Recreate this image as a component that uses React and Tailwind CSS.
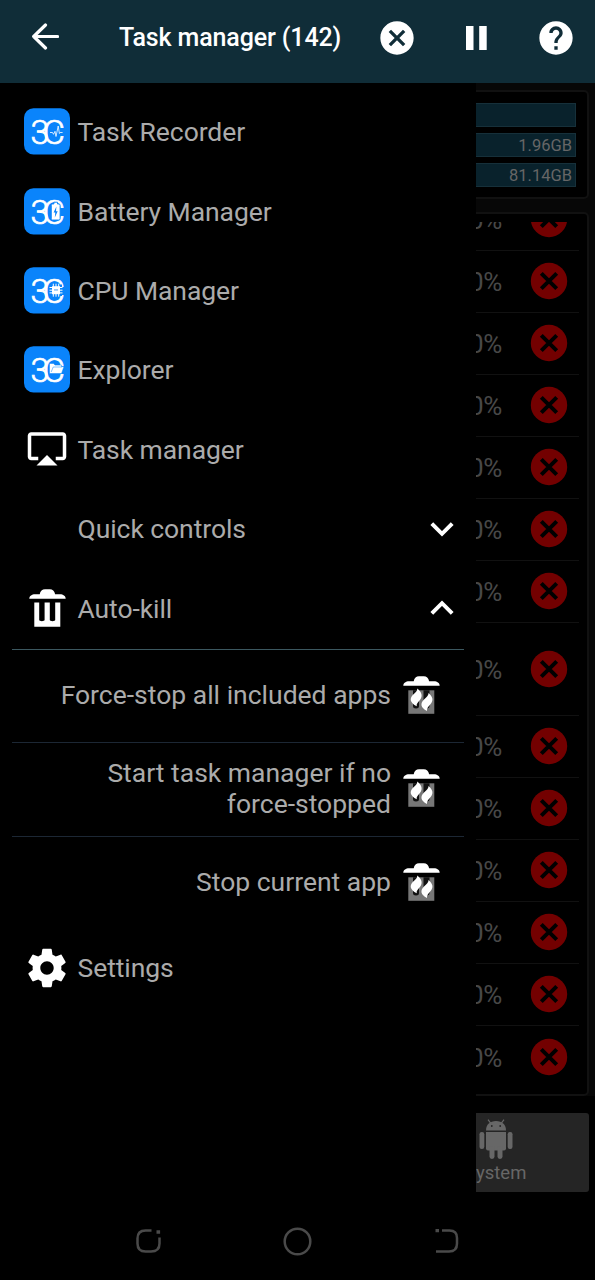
import React from "react";
import { MdAirplay, MdCancel, MdHelp } from "react-icons/md";

function AppLogo({ kind }) {
  return (
    <svg className="h-[47px] w-[46px]" viewBox="0 0 46 47">
      <rect x="0" y="0.2" width="46" height="46.4" rx="9.5" fill="#0a84fb" />
      <text transform="translate(6.6 35.700)" letterSpacing="-6.600" fill="#fff" stroke="#fff" strokeWidth="0.7" fontFamily="Roboto, sans-serif" fontWeight="300" fontSize="34">3C</text>
      {kind === "pulse" && (
        <path d="M26 24.500h2.500l1 1.800 1.500-3 1 5.200 2.200-10.500 1.200 7.500 .7-1h2.500" fill="none" stroke="#fff" strokeWidth=".8" />
      )}
      {kind === "battery" && (
        <>
          <path d="M28.500 16h1.400v-1.800h3.600V16h1.400q1.200 0 1.200 1.200v13.600q0 1.200-1.200 1.200h-6.400q-1.200 0-1.200-1.200V17.200q0-1.200 1.200-1.200z" fill="#fff" stroke="#0a84fb" strokeWidth=".9" />
          <path d="M32.400 18.500l-2.800 6h1.700l-.5 5 2.900-6.300H32z" fill="#0a84fb" />
        </>
      )}
      {kind === "chip" && (
        <>
          <rect x="26.500" y="17.500" width="11.500" height="11.500" fill="#0a84fb" />
          <path d="M29.300 16.700v13M32 16.700v13M34.700 16.700v13M25.500 20.500h13M25.500 23.200h13M25.500 25.900h13" fill="none" stroke="#fff" strokeWidth="1" />
          <rect x="28" y="19.200" width="8" height="8" fill="#fff" />
          <rect x="30" y="22" width="4" height="1.800" fill="#9cc8f5" />
        </>
      )}
      {kind === "folder" && (
        <>
          <path d="M25.500 27.500V17.500h4l1.500 1.600h6.500v1.400H40l-2.500 7z" fill="#fff" stroke="#0a84fb" strokeWidth=".5" />
          <path d="M27.200 26l2-5h9" fill="none" stroke="#0a84fb" strokeWidth=".5" />
        </>
      )}
    </svg>
  );
}

function TrashIcon() {
  return (
    <svg className="h-[38px] w-[37px]" viewBox="0 0 37 38" fill="#fff">
      <path d="M.3 9.700C.3 6.800 3 5.200 6 5.200h4.700C11.300 2 13.300.3 16 .3h4.800c2.700 0 4.700 1.700 5.300 4.900H31c3 0 5.700 1.600 5.700 4.500z" />
      <path d="M5.300 13.500h4.900V31c0 1.500 5.400 1.500 5.400 0V13.500h5.200V31c0 1.500 5.400 1.500 5.400 0V13.500h5.100v24.300h-26z" />
    </svg>
  );
}

function BurnTrashIcon() {
  return (
    <svg className="mb-[2px] h-[38px] w-[37px]" viewBox="0 0 37 38">
      <path d="M.3 9.700C.3 6.800 3 5.200 6 5.200h4.700C11.300 2 13.300.3 16 .3h4.800c2.700 0 4.700 1.700 5.300 4.900H31c3 0 5.700 1.600 5.700 4.500z" fill="#fff" />
      <path d="M5.300 14.300h26v23.500h-26z" fill="#777" />
      <path d="M10 14.300h6V30q0 2.500-3 2.500T10 30zM20.500 14.300h6V30q0 2.500-3 2.500t-3-2.500z" fill="#111" />
      <path d="M14.300 12.500c4.900 4 5.500 8 2.600 11.500-2.200 2.700-3.600 3.700-3.200 6.200-6.700-3.200-7.500-7.700-3.700-11.400 3-2.800 4.300-3.600 4.300-6.300zM25.500 17c4.700 4 5 7.700 1.900 11.300-2.300 2.500-3.600 3.700-3.400 6.700-6.500-3.500-7-7.700-3-11.600 2.800-2.700 4.500-3.600 4.500-6.400z" fill="#fff" />
    </svg>
  );
}

function Gear() {
  return (
    <svg className="size-[46px]" viewBox="0 0 24 24" fill="#fff">
      <path d="M19.430 12.980c.04-.32.07-.64.07-.98s-.03-.66-.07-.98l2.110-1.650c.19-.15.24-.42.12-.64l-2-3.460c-.12-.22-.39-.3-.61-.22l-2.490 1c-.52-.4-1.080-.73-1.690-.98l-.38-2.650C14.460 2.180 14.250 2 14 2h-4c-.25 0-.46.18-.49.42l-.38 2.650c-.61.25-1.170.59-1.690.98l-2.490-1c-.23-.09-.49 0-.61.22l-2 3.460c-.13.22-.07.49.12.64l2.110 1.650c-.04.32-.07.65-.07.98s.03.66.07.98l-2.110 1.650c-.19.15-.24.42-.12.64l2 3.460c.12.22.39.3.61.22l2.490-1c.52.4 1.080.73 1.690.98l.38 2.650c.03.24.24.42.49.42h4c.25 0 .46-.18.49-.42l.38-2.650c.61-.25 1.170-.59 1.690-.98l2.490 1c.23.09.49 0 .61-.22l2-3.460c.12-.22.07-.49-.12-.64l-2.110-1.650zM12 15.500c-1.930 0-3.500-1.570-3.500-3.500s1.570-3.500 3.500-3.500 3.500 1.570 3.500 3.500-1.570 3.500-3.500 3.500z" />
    </svg>
  );
}

function Chevron({ up }) {
  return (
    <svg className="h-4 w-6" viewBox="0 0 24 16" fill="none" stroke="#fff" strokeWidth="4">
      <path d={up ? "M1.800 13.300 12 3.200l10.200 10.100" : "M1.800 2.700 12 12.800 22.200 2.700"} />
    </svg>
  );
}

function MenuRow({ icon, label, end }) {
  return (
    <div className="flex h-[79.4px] items-center pl-[20px] pr-[22px]">
      <div className="flex w-[54px] justify-center">{icon}</div>
      <span className="ml-[3.500px] flex-1 text-[26.500px] leading-[31px] tracking-[-0.07px]">{label}</span>
      {end}
    </div>
  );
}

function SubRow({ lines, border }) {
  return (
    <div className={`ml-3 mr-3 flex h-[93.5px] items-center justify-end border-t pr-[24px] ${border}`}>
      <span className="mr-[12px] pb-[3px] text-right text-[26.500px] leading-[31px]">
        {lines.map((l) => (
          <span key={l} className="block">{l}</span>
        ))}
      </span>
      <BurnTrashIcon />
    </div>
  );
}

function KillIcon() {
  return (
    <svg className="size-[38px] shrink-0" viewBox="0 0 38 38">
      <circle cx="19" cy="19" r="18.200" fill="#730000" />
      <path d="m11.300 11.300 15.400 15.400m0-15.400L11.300 26.700" stroke="#000" strokeWidth="4" />
    </svg>
  );
}

function ProcessRow({ height, last }) {
  return (
    <div className={`mr-[8px] flex shrink-0 items-center justify-between pr-[11px] ${height} ${last ? "" : "border-b border-[#111]"}`}>
      <span className="-ml-[7px] pt-[2px] text-[26px] leading-[30px] tracking-[-0.3px] text-[#484848]">0%</span>
      <KillIcon />
    </div>
  );
}

const heights = [
  "h-[62px]", "h-[62px]", "h-[62px]", "h-[62px]", "h-[62px]", "h-[62px]", "h-[62px]",
  "h-[93px]", "h-[62px]", "h-[62px]", "h-[62px]", "h-[62px]", "h-[62px]", "h-[62px]",
];

function Android() {
  return (
    <svg className="h-[40px] w-[34px]" viewBox="0 0 34 40" fill="#676767">
      <path d="M7 11.500C7 5.500 11 2 17 2s10 3.500 10 9.500z" />
      <path d="m9 .6 3 4M25 .6l-3 4" stroke="#676767" strokeWidth="1.200" />
      <circle cx="12.800" cy="7" r=".9" fill="#252525" />
      <circle cx="21.200" cy="7" r=".9" fill="#252525" />
      <path d="M7 13h20v16.500q0 2-2 2H9q-2 0-2-2z" />
      <rect x=".5" y="13" width="4.800" height="17" rx="2.200" />
      <rect x="28.700" y="13" width="4.800" height="17" rx="2.200" />
      <rect x="10.500" y="27" width="5" height="13" rx="2.400" />
      <rect x="18.500" y="27" width="5" height="13" rx="2.400" />
    </svg>
  );
}

export default function App() {
  return (
    <div className="flex h-[1280px] w-[595px] flex-col overflow-hidden bg-black font-['Roboto',sans-serif] text-[#ababab]">
      <header className="flex h-[83px] shrink-0 items-center bg-[#102d38] pb-[8px] pl-[31px]">
        <svg className="mb-px h-7 w-7 shrink-0" viewBox="0 0 28 28" fill="none" stroke="#fff" strokeWidth="3.200" strokeLinecap="round" strokeLinejoin="round">
          <path d="M14.500 2 2.700 13.500 14.500 25M2.700 13.500H26.500" />
        </svg>
        <h1 className="ml-[60px] w-[258px] whitespace-nowrap pt-px text-[25px] font-medium tracking-[-0.13px] text-white">Task manager (142)</h1>
        <MdCancel className="size-10 shrink-0 text-white" />
        <svg className="ml-[49px] h-6 w-[21px] shrink-0" viewBox="0 0 21 24" fill="#fff">
          <path d="M0 0h7.500v24H0zM13.200 0h7.500v24h-7.500z" />
        </svg>
        <MdHelp className="ml-[49px] size-10 shrink-0 text-white" />
      </header>

      <div className="flex h-[1117px] shrink-0">
        <nav className="w-[476px] shrink-0 bg-black pt-[9px]">
          <MenuRow icon={<AppLogo kind="pulse" />} label="Task Recorder" />
          <MenuRow icon={<AppLogo kind="battery" />} label="Battery Manager" />
          <MenuRow icon={<AppLogo kind="chip" />} label="CPU Manager" />
          <MenuRow icon={<AppLogo kind="folder" />} label="Explorer" />
          <MenuRow icon={<MdAirplay className="mb-[2px] size-[42px] text-white" />} label="Task manager" />
          <MenuRow label="Quick controls" end={<Chevron />} />
          <MenuRow icon={<TrashIcon />} label="Auto-kill" end={<Chevron up />} />
          <div className="pt-[1px]">
            <SubRow border="border-[#3c5860]" lines={["Force-stop all included apps"]} />
            <SubRow border="border-[#1c2734]" lines={["Start task manager if no", "force-stopped"]} />
            <SubRow border="border-[#1c2734]" lines={["Stop current app"]} />
          </div>
          <div className="-mt-px">
            <MenuRow icon={<Gear />} label="Settings" />
          </div>
        </nav>

        <aside className="flex w-[119px] shrink-0 flex-col overflow-hidden bg-[#070707] pt-[7px]">
          <section className="flex h-[109px] w-[113px] shrink-0 flex-col gap-[6px] rounded-r-[5px] border-2 border-l-0 border-[#111] bg-black pt-[11px] text-[16.500px] text-[#666]">
            <div className="h-6 w-[100px] border border-l-0 border-[#16303a] bg-[#09222c]" />
            <div className="flex h-6 w-[100px] items-center justify-end border border-l-0 border-[#16303a] bg-[#09222c] pr-[3px] pt-px leading-6">1.96GB</div>
            <div className="flex h-6 w-[100px] items-center justify-end border border-l-0 border-[#16303a] bg-[#09222c] pr-[3px] pt-px leading-6">81.14GB</div>
          </section>
          <section className="mt-[13px] flex h-[884px] w-[113px] shrink-0 flex-col rounded-r-[5px] border-2 border-l-0 border-[#111] bg-black pt-[8px]">
            <div className="flex h-[871px] flex-col justify-end overflow-hidden pb-[5.500px]">
              {heights.map((h, i) => (
                <ProcessRow key={i} height={h} last={i === heights.length - 1} />
              ))}
            </div>
          </section>
          <div className="flex h-[120px] shrink-0 flex-col bg-black pt-[17px]">
            <div className="flex h-[79px] w-[113px] flex-col rounded-r-[3px] bg-[#252525] pl-[3px] pt-[6px]">
              <Android />
              <span className="-ml-[14px] mt-[3px] text-[18.500px] leading-[22px] text-[#676767]">System</span>
            </div>
          </div>
        </aside>
      </div>

      <footer className="flex h-20 items-center pl-[136px] pt-[2px]">
        <svg className="h-6 w-[25px]" viewBox="0 0 25 24" fill="none" stroke="#4a4a4a" strokeWidth="2.500">
          <path d="M15.500 1.500H9.500Q1.500 1.500 1.500 9.500v5Q1.500 22.500 9.500 22.500h5.500Q23.500 22.500 23.500 14.500V8.500" />
          <path d="M20.500 3h3.600" strokeWidth="3.500" />
        </svg>
        <svg className="ml-[122px] size-[29px]" viewBox="0 0 29 29" fill="none" stroke="#4a4a4a" strokeWidth="2.500">
          <circle cx="14.500" cy="14.500" r="12.800" />
        </svg>
        <svg className="ml-[122px] h-6 w-[25px]" viewBox="0 0 25 24" fill="none" stroke="#4a4a4a" strokeWidth="2.500">
          <path d="M8 1.500h7.500Q23 1.500 23 9v5.500Q23 22.500 15 22.500H2" />
          <path d="M1.500 1.500H5" strokeWidth="3.500" />
        </svg>
      </footer>
    </div>
  );
}
